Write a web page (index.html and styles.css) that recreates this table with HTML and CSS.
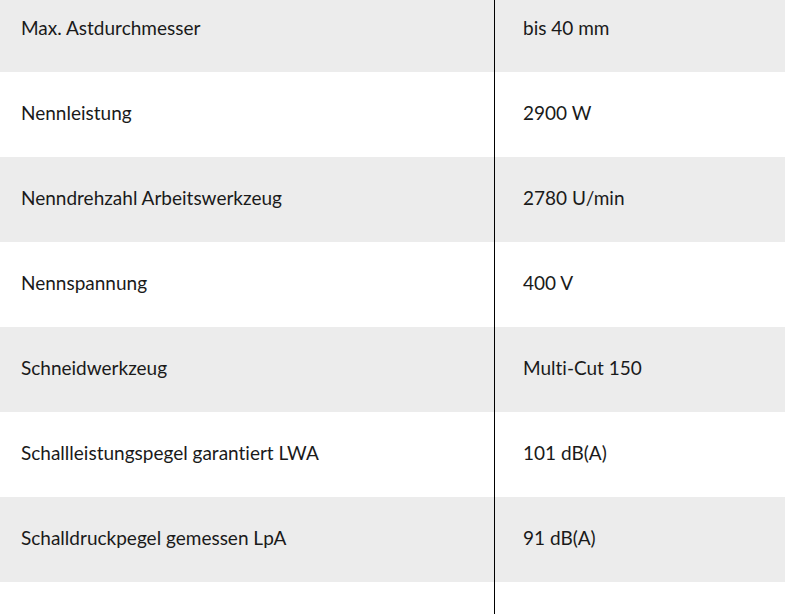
FILE: index.html
```html
<!DOCTYPE html>
<html lang="de">
<head>
<meta charset="utf-8">
<link rel="stylesheet" href="styles.css">
</head>
<body>
<table class="specs">
  <colgroup><col class="col-label"><col class="col-value"></colgroup>
  <tbody>
    <tr class="row alt"><td class="label">Max. Astdurchmesser</td><td class="value">bis 40 mm</td></tr>
    <tr class="row"><td class="label">Nennleistung</td><td class="value">2900 W</td></tr>
    <tr class="row alt"><td class="label">Nenndrehzahl Arbeitswerkzeug</td><td class="value">2780 U/min</td></tr>
    <tr class="row"><td class="label">Nennspannung</td><td class="value">400 V</td></tr>
    <tr class="row alt"><td class="label">Schneidwerkzeug</td><td class="value">Multi-Cut 150</td></tr>
    <tr class="row"><td class="label">Schallleistungspegel garantiert LWA</td><td class="value">101 dB(A)</td></tr>
    <tr class="row alt"><td class="label">Schalldruckpegel gemessen LpA</td><td class="value">91 dB(A)</td></tr>
    <tr class="row"><td class="label"></td><td class="value"></td></tr>
  </tbody>
</table>
</body>
</html>
```
FILE: styles.css
```css
html, body {
  margin: 0;
  padding: 0;
  background: #fff;
}
body {
  font-family: Lato, "Liberation Sans", sans-serif;
  font-size: 19px;
  color: #1a1a1a;
  font-variant-ligatures: none;
  overflow: hidden;
}
.specs {
  width: 785px;
  table-layout: fixed;
  border-collapse: separate;
  border-spacing: 0;
  margin-top: -13px;
}
.col-label {
  width: 495px;
}
.row td {
  height: 85px;
  box-sizing: border-box;
  padding: 0 0 5px 0;
  vertical-align: middle;
}
.row.alt td {
  background: #ececec;
}
.row .label {
  padding-left: 21px;
  border-right: 1px solid #000;
}
.row .value {
  padding-left: 28px;
}
```
